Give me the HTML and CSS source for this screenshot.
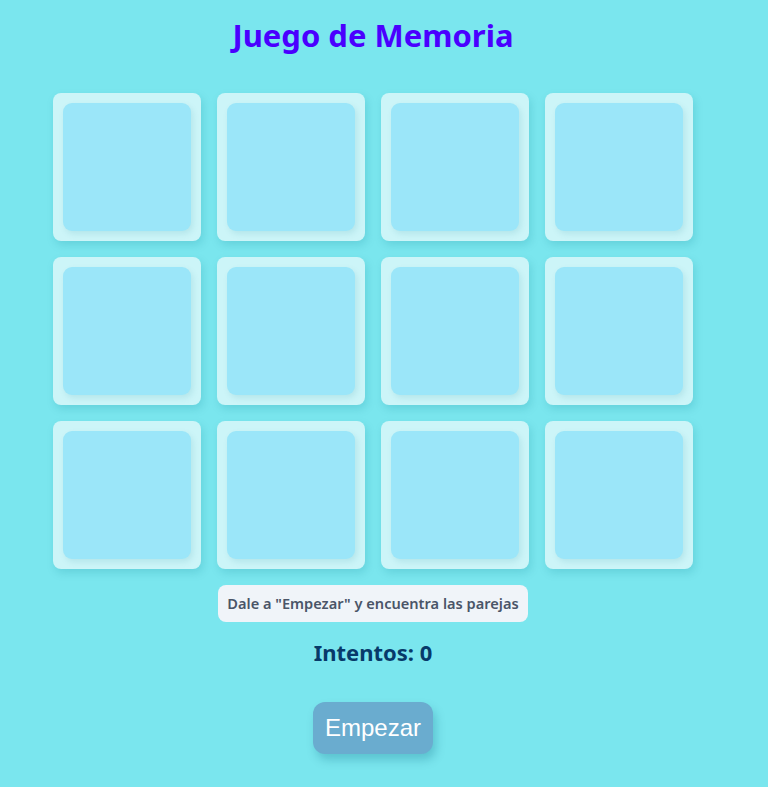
FILE: index.html
```html
<!DOCTYPE html>
<html lang="es">
<head>
<meta charset="utf-8">
<title>Juego de Memoria</title>
<link rel="stylesheet" href="styles.css">
</head>
<body>
<main class="app">
  <h1 class="title">Juego de Memoria</h1>
  <div class="board">
    <div class="card"><div class="card-face"></div></div>
    <div class="card"><div class="card-face"></div></div>
    <div class="card"><div class="card-face"></div></div>
    <div class="card"><div class="card-face"></div></div>
    <div class="card"><div class="card-face"></div></div>
    <div class="card"><div class="card-face"></div></div>
    <div class="card"><div class="card-face"></div></div>
    <div class="card"><div class="card-face"></div></div>
    <div class="card"><div class="card-face"></div></div>
    <div class="card"><div class="card-face"></div></div>
    <div class="card"><div class="card-face"></div></div>
    <div class="card"><div class="card-face"></div></div>
  </div>
  <p class="message">Dale a "Empezar" y encuentra las parejas</p>
  <p class="attempts">Intentos: 0</p>
  <button class="start">Empezar</button>
</main>
</body>
</html>
```
FILE: styles.css
```css
html, body {
  margin: 0;
  padding: 0;
  background: #7ae6ee;
  height: 100%;
}
body {
  font-family: "Noto Sans", "Open Sans", sans-serif;
}
.app {
  width: 746px;
  display: flex;
  flex-direction: column;
  align-items: center;
  padding-top: 15px;
}
.title {
  margin: 0;
  font-size: 31px;
  line-height: 40px;
  font-weight: 700;
  color: #4a00ff;
}
.board {
  margin-top: 38px;
  display: grid;
  grid-template-columns: repeat(4, 148px);
  gap: 16px;
}
.card {
  width: 148px;
  height: 148px;
  box-sizing: border-box;
  padding: 10px;
  border-radius: 8px;
  background: #ccf5f8;
  box-shadow: 2px 4px 8px rgba(0, 120, 140, 0.18);
}
.card-face {
  width: 100%;
  height: 100%;
  border-radius: 9px;
  background: #9be6f9;
  box-shadow: 2px 3px 6px rgba(0, 120, 140, 0.12);
}
.message {
  margin: 16px 0 0;
  padding: 0 9px;
  height: 37px;
  line-height: 37px;
  box-sizing: border-box;
  border-radius: 8px;
  background: #f0f4f9;
  color: #4a5568;
  font-size: 14.6px;
  font-weight: 600;
}
.attempts {
  margin: 15px 0 0;
  font-size: 22px;
  line-height: 30px;
  font-weight: 700;
  color: #073a6a;
}
.start {
  margin-top: 35px;
  width: 120px;
  height: 52px;
  border: none;
  border-radius: 12px;
  background: #6aaccf;
  color: #ffffff;
  font-family: "Liberation Sans", Arial, sans-serif;
  font-size: 24px;
  box-shadow: 3px 6px 10px rgba(0, 90, 120, 0.25);
  padding: 0;
}
```
